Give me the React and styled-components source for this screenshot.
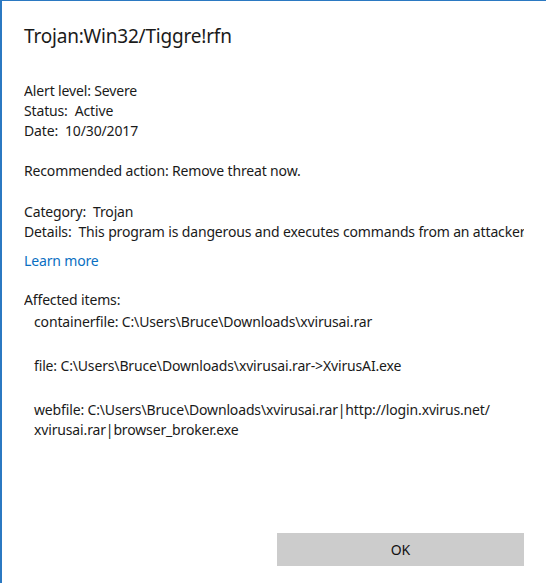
import React from "react";
import styled, { createGlobalStyle } from "styled-components";

const GlobalStyle = createGlobalStyle`
  html, body {
    margin: 0;
    padding: 0;
    background: #fff;
  }
  body {
    font-family: "Noto Sans", "Open Sans", sans-serif;
    color: #1a1a1a;
  }
`;

const Window = styled.div`
  box-sizing: border-box;
  width: 546px;
  height: 583px;
  border-left: 2px solid #2b79c2;
  border-top: 1px solid #2b79c2;
  background: #fff;
  display: flex;
  flex-direction: column;
  padding: 21px 22px 17px 22px;
`;

const Title = styled.h1`
  margin: 0 0 31px 0;
  font-size: 19px;
  font-weight: 400;
  line-height: 28px;
  letter-spacing: -0.2px;
`;

const Body = styled.div`
  flex: 1;
  overflow: hidden;
  font-size: 14px;
  line-height: 20px;
  letter-spacing: -0.15px;
`;

const Group = styled.div`
  margin-bottom: ${(p) => p.gap || 20}px;
`;

const Line = styled.div`
  white-space: nowrap;
  overflow: hidden;
`;

const Link = styled.a`
  display: block;
  color: #0a6fc2;
  text-decoration: none;
  margin: -11px 0 19px;
`;

const Heading = styled.div`
  margin-bottom: 2px;
`;

const Item = styled.div`
  padding-left: 10px;
  margin-bottom: ${(p) => (p.last ? 0 : 24)}px;
`;

const Footer = styled.div`
  display: flex;
  justify-content: flex-end;
`;

const Button = styled.button`
  width: 247px;
  height: 33px;
  border: none;
  background: #cccccc;
  font-family: inherit;
  font-size: 14px;
  color: #111;
  cursor: pointer;
`;

export default function App() {
  return (
    <>
      <GlobalStyle />
      <Window>
        <Title>Trojan:Win32/Tiggre!rfn</Title>
        <Body>
          <Group>
            <Line>Alert level: Severe</Line>
            <Line>Status:&nbsp; Active</Line>
            <Line>Date:&nbsp; 10/30/2017</Line>
          </Group>
          <Group gap={21}>
            <Line>Recommended action: Remove threat now.</Line>
          </Group>
          <Group>
            <Line>Category:&nbsp; Trojan</Line>
            <Line>Details:&nbsp; This program is dangerous and executes commands from an attacker.</Line>
          </Group>
          <Link href="#">Learn more</Link>
          <Heading>Affected items:</Heading>
          <Item>containerfile: C:\Users\Bruce\Downloads\xvirusai.rar</Item>
          <Item>file: C:\Users\Bruce\Downloads\xvirusai.rar-&gt;XvirusAI.exe</Item>
          <Item last>
            webfile: C:\Users\Bruce\Downloads\xvirusai.rar|http://login.xvirus.net/
            <br />
            xvirusai.rar|browser_broker.exe
          </Item>
        </Body>
        <Footer>
          <Button>OK</Button>
        </Footer>
      </Window>
    </>
  );
}
